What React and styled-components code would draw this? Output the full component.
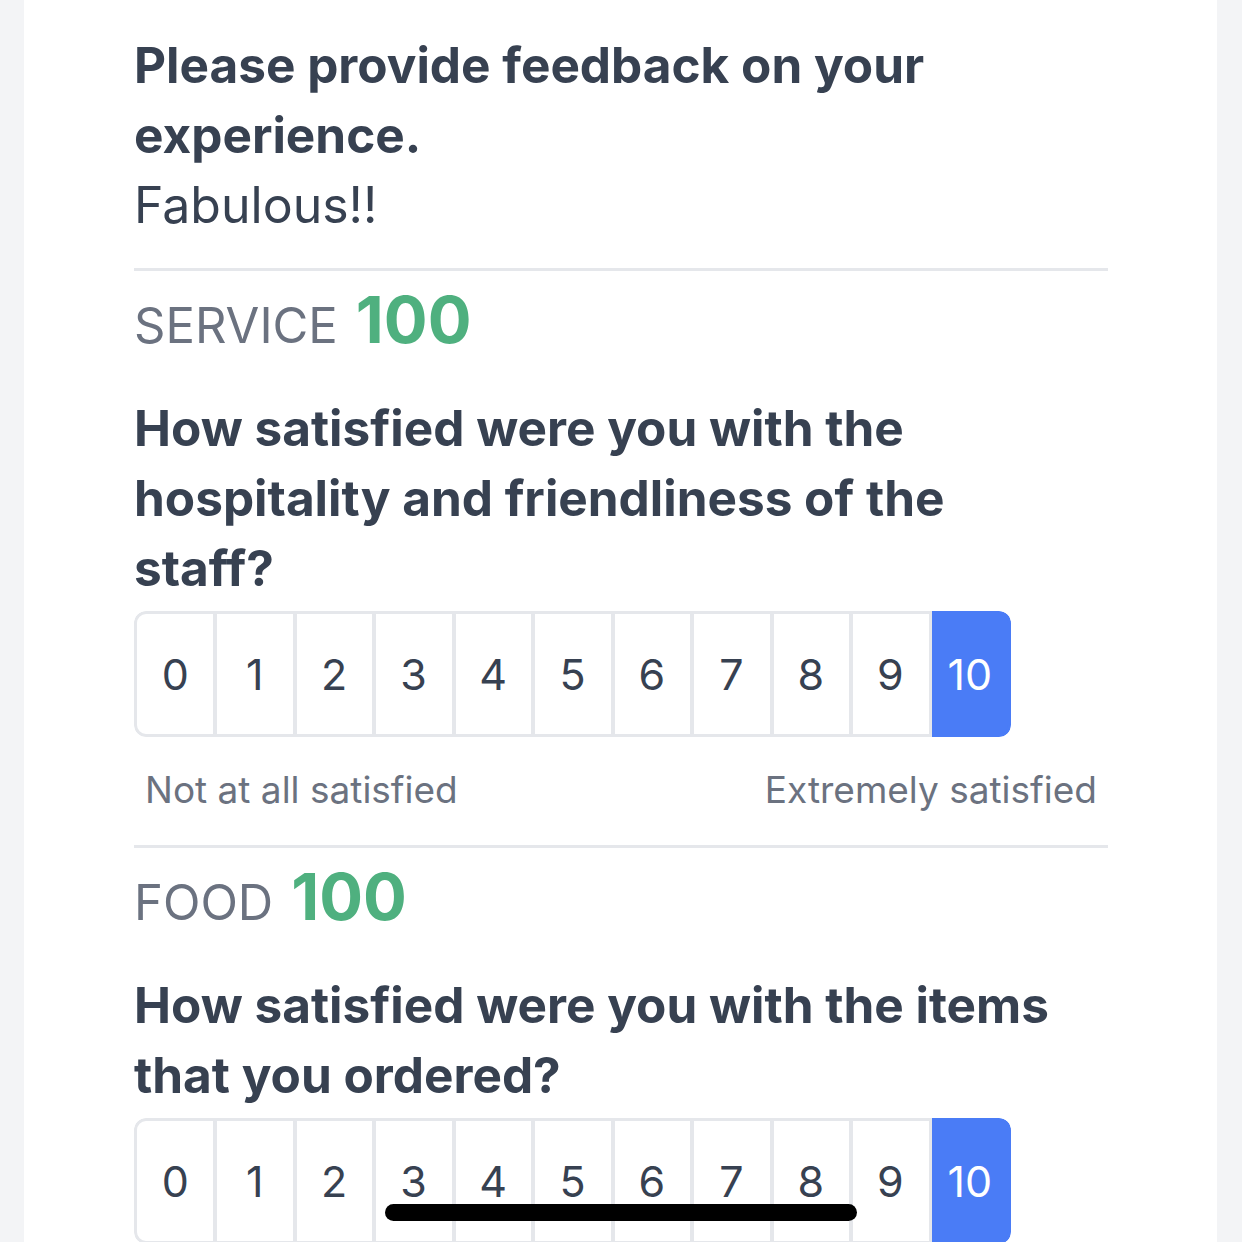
import React from "react";
import styled, { createGlobalStyle } from "styled-components";

const GlobalStyle = createGlobalStyle`
  html, body {
    margin: 0;
    padding: 0;
    background: #f3f4f6;
    font-family: Inter, "Noto Sans", sans-serif;
    color: #374151;
  }
`;

const Page = styled.div`
  min-height: 1242px;
  padding: 0 25px 0 24px;
  box-sizing: border-box;
`;

const Card = styled.div`
  background: #ffffff;
  min-height: 1242px;
  padding: 30px 109px 0 110px;
  box-sizing: border-box;
`;

const Title = styled.h1`
  margin: 0;
  font-size: 49.5px;
  line-height: 70px;
  font-weight: 700;
  color: #374151;
`;

const Answer = styled.p`
  margin: 0;
  font-size: 50px;
  line-height: 70px;
  font-weight: 400;
  color: #374151;
`;

const Divider = styled.hr`
  border: none;
  height: 3px;
  background: #e5e7eb;
  margin: ${(p) => p.$top}px 0 0;
`;

const Section = styled.section`
  display: flex;
  flex-direction: column;
`;

const SectionHead = styled.h2`
  margin: 14px 0 0;
  line-height: 70px;
  font-size: 49px;
  font-weight: 400;
  color: #6b7280;
  display: flex;
  align-items: baseline;
  gap: 18px;
`;

const Score = styled.span`
  font-size: 65px;
  font-weight: 700;
  color: #4fb07f;
`;

const Question = styled.h3`
  margin: 32px 0 0;
  max-width: 950px;
  font-size: 49.5px;
  line-height: 70px;
  font-weight: 700;
  color: #374151;
`;

const Scale = styled.div`
  display: flex;
  width: 877px;
  height: 126px;
  margin-top: 8px;
  border-radius: 12px;
  overflow: hidden;
  box-sizing: border-box;
`;

const Cell = styled.div`
  flex: 1;
  display: flex;
  align-items: center;
  justify-content: center;
  font-size: 43px;
  color: ${(p) => (p.$active ? "#ffffff" : "#374151")};
  background: ${(p) => (p.$active ? "#4a7cf6" : "#ffffff")};
  border: 3px solid ${(p) => (p.$active ? "#4a7cf6" : "#e5e7eb")};
  border-left-width: ${(p) => (p.$first ? 3 : 0)}px;
  box-shadow: ${(p) => (p.$first || p.$active ? "none" : "inset 1px 0 0 #e5e7eb")};
  &:first-child {
    border-radius: 12px 0 0 12px;
  }
  &:last-child {
    border-radius: 0 12px 12px 0;
  }
`;

const Labels = styled.div`
  display: flex;
  justify-content: space-between;
  padding: 0 11px;
  margin-top: 28px;
  font-size: 37px;
  line-height: 50px;
  color: #6b7280;
`;

const HomeBar = styled.div`
  position: fixed;
  left: 385px;
  top: 1204px;
  width: 472px;
  height: 17px;
  border-radius: 9px;
  background: #000000;
`;

function RatingScale({ value }) {
  return (
    <Scale>
      {Array.from({ length: 11 }, (_, i) => (
        <Cell key={i} $first={i === 0} $active={i === value}>
          {i}
        </Cell>
      ))}
    </Scale>
  );
}

const sections = [
  {
    name: "SERVICE",
    score: 100,
    question: "How satisfied were you with the hospitality and friendliness of the staff?",
  },
  {
    name: "FOOD",
    score: 100,
    question: "How satisfied were you with the items that you ordered?",
  },
];

export default function App() {
  return (
    <Page>
      <GlobalStyle />
      <Card>
        <Title>Please provide feedback on your experience.</Title>
        <Answer>Fabulous!!</Answer>
        {sections.map((s, idx) => (
          <Section key={s.name}>
            <Divider $top={idx === 0 ? 28 : 30} />
            <SectionHead>
              <span>{s.name}</span>
              <Score>{s.score}</Score>
            </SectionHead>
            <Question>{s.question}</Question>
            <RatingScale value={10} />
            {idx === 0 && (
              <Labels>
                <span>Not at all satisfied</span>
                <span>Extremely satisfied</span>
              </Labels>
            )}
          </Section>
        ))}
      </Card>
      <HomeBar />
    </Page>
  );
}
